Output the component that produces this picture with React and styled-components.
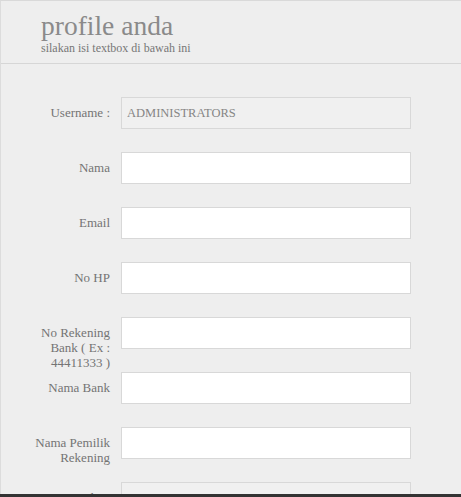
import React from "react";
import styled, { createGlobalStyle } from "styled-components";

const GlobalStyle = createGlobalStyle`
  html {
    background: #333;
  }
  body {
    margin: 0;
    font-family: "Liberation Serif", "Times New Roman", serif;
  }
`;

const fields = [
  { label: "Username :", value: "ADMINISTRATORS", readOnly: true },
  { label: "Nama" },
  { label: "Email" },
  { label: "No HP" },
  { label: "No Rekening Bank ( Ex : 44411333 )" },
  { label: "Nama Bank" },
  { label: "Nama Pemilik Rekening" },
  { label: "Upline", value: "ERABARUBO", readOnly: true },
];

const App = () => {
  return (
    <>
      <GlobalStyle />
      <Page>
        <Header>
          <Title>profile anda</Title>
          <Subtitle>silakan isi textbox di bawah ini</Subtitle>
        </Header>
        <Form>
          {fields.map((f) => (
            <Row key={f.label}>
              <Label>{f.label}</Label>
              <Input
                readOnly={f.readOnly}
                $locked={f.readOnly}
                defaultValue={f.value || ""}
              />
            </Row>
          ))}
        </Form>
      </Page>
    </>
  );
};

const Page = styled.div`
  height: 494px;
  overflow: hidden;
  background: #eeeeee;
  border-top: 1px solid #d9d9d9;
  border-left: 1px solid #dcdcdc;
  box-sizing: border-box;
`;

const Header = styled.div`
  height: 63px;
  box-sizing: border-box;
  padding: 9px 0 0 40px;
  border-bottom: 1px solid #d6d6d6;
`;

const Title = styled.div`
  font-size: 27.5px;
  line-height: 32px;
  color: #8a8a8a;
`;

const Subtitle = styled.div`
  font-size: 12px;
  line-height: 13px;
  color: #777;
`;

const Form = styled.div`
  display: flex;
  flex-direction: column;
  padding-top: 33px;
`;

const Row = styled.div`
  display: flex;
  align-items: flex-start;
  height: 55px;
  flex-shrink: 0;
`;

const Label = styled.div`
  width: 82px;
  margin-left: 27px;
  margin-right: 11px;
  padding-top: 8px;
  text-align: right;
  font-size: 13px;
  line-height: 15px;
  color: #747474;
`;

const Input = styled.input`
  width: 290px;
  height: 32px;
  box-sizing: border-box;
  border: 1px solid #d8d8d8;
  background: ${(p) => (p.$locked ? "#f0f0f0" : "#ffffff")};
  padding: 0 5px;
  font-family: "Liberation Serif", "Times New Roman", serif;
  font-size: 12.5px;
  color: #858585;
  outline: none;
`;

export default App;
